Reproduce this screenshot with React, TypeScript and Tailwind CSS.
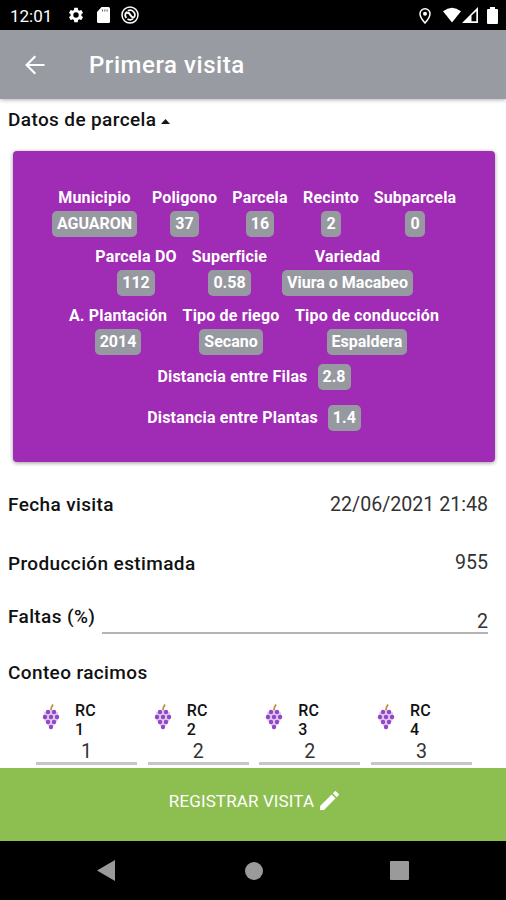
import React from "react";

type FieldData = { label: string; value: string; width: string };

const row1: FieldData[] = [
  { label: "Municipio", value: "AGUARON", width: "w-[85px]" },
  { label: "Poligono", value: "37", width: "w-[65px]" },
  { label: "Parcela", value: "16", width: "w-[56px]" },
  { label: "Recinto", value: "2", width: "w-[56px]" },
  { label: "Subparcela", value: "0", width: "w-[82px]" },
];

const row2: FieldData[] = [
  { label: "Parcela DO", value: "112", width: "w-[82px]" },
  { label: "Superficie", value: "0.58", width: "w-[75px]" },
  { label: "Variedad", value: "Viura o Macabeo", width: "w-[131px]" },
];

const row3: FieldData[] = [
  { label: "A. Plantación", value: "2014", width: "w-[99px]" },
  { label: "Tipo de riego", value: "Secano", width: "w-[97px]" },
  { label: "Tipo de conducción", value: "Espaldera", width: "w-[145px]" },
];

const clusters = [
  { n: "1", value: "1" },
  { n: "2", value: "2" },
  { n: "3", value: "2" },
  { n: "4", value: "3" },
];

function Badge({ children }: { children: React.ReactNode }) {
  return (
    <span className="h-[26px] rounded-[5px] bg-[#9799a1] px-[5px] text-[16px] leading-[26px] font-bold">
      {children}
    </span>
  );
}

function FieldRow({ fields }: { fields: FieldData[] }) {
  return (
    <div className="flex h-[59px] justify-center gap-[15px]">
      {fields.map((f) => (
        <div key={f.label} className={`flex flex-col items-center whitespace-nowrap ${f.width}`}>
          <span className="mb-[2px] h-[22px] text-[16px] leading-[22px] font-bold tracking-[0.17px]">{f.label}</span>
          <Badge>{f.value}</Badge>
        </div>
      ))}
    </div>
  );
}

function DistanceRow({ label, value }: { label: string; value: string }) {
  return (
    <div className="flex h-[26px] items-center justify-center gap-[10px] whitespace-nowrap">
      <span className="text-[16px] leading-[26px] font-bold tracking-[0.18px]">{label}</span>
      <Badge>{value}</Badge>
    </div>
  );
}

function Label({ children }: { children: React.ReactNode }) {
  return <span className="text-[19px] leading-[24px] font-medium tracking-[0.38px]">{children}</span>;
}

function Grapes() {
  const dots = [
    [6, 9], [12, 9],
    [3, 14], [9, 14], [15, 14],
    [6, 19], [12, 19],
    [9, 24],
  ];
  return (
    <svg className="mt-[2px] h-[28px] w-[18px]" viewBox="0 0 18 28">
      <path d="M9 6.500 2.500 9 0.500 14.500 5 21 9 26.500 13 21 17.500 14.500 15.500 9Z" fill="#dfc9f0" />
      <path d="M9 7C9 4.600 9.800 3.200 11 1.500" stroke="#c68a3c" strokeWidth="1.800" fill="none" />
      {dots.map(([x, y]) => (
        <circle key={`${x}-${y}`} cx={x} cy={y} r="2.200" fill="#9048c4" />
      ))}
    </svg>
  );
}

function StatusBar() {
  return (
    <div className="flex h-[30px] items-center bg-black text-white">
      <span className="ml-[10px] w-[57px] pt-[1px] text-[17px] leading-[30px]">12:01</span>
      <svg className="h-[18px] w-[18px]" viewBox="0 0 24 24" fill="white">
        <path d="M19.140 12.940c.04-.3.06-.61.06-.94 0-.32-.02-.64-.07-.94l2.030-1.580a.49.49 0 0 0 .12-.61l-1.920-3.320a.488.488 0 0 0-.59-.22l-2.390.96c-.5-.38-1.030-.7-1.620-.94l-.36-2.540a.484.484 0 0 0-.48-.41h-3.840c-.24 0-.43.17-.47.41l-.36 2.540c-.59.24-1.130.57-1.620.94l-2.390-.96c-.22-.08-.47 0-.59.22L2.740 8.870c-.12.21-.08.47.12.61l2.030 1.580c-.05.3-.09.63-.09.94s.02.64.07.94l-2.030 1.580a.49.49 0 0 0-.12.61l1.920 3.320c.12.22.37.29.59.22l2.390-.96c.5.38 1.030.7 1.620.94l.36 2.540c.05.24.24.41.48.41h3.840c.24 0 .44-.17.47-.41l.36-2.540c.59-.24 1.130-.56 1.620-.94l2.390.96c.22.08.47 0 .59-.22l1.920-3.320c.12-.22.07-.47-.12-.61l-2.010-1.580zM12 15.600A3.600 3.600 0 1 1 12 8.400a3.600 3.600 0 0 1 0 7.200z" />
      </svg>
      <svg className="ml-[12px] h-[16px] w-[13px]" viewBox="0 0 13 16">
        <path d="M4.500 0H11.500Q13 0 13 1.500V14.500Q13 16 11.500 16H1.500Q0 16 0 14.500V5Z" fill="white" />
        <path d="M5.500 2.500V4.500M7.800 2.500V4.500M10.100 2.500V4.500" stroke="#666" strokeWidth="1.100" />
      </svg>
      <svg className="ml-[11px] h-[18px] w-[18px]" viewBox="0 0 18 18" fill="none" stroke="white">
        <circle cx="9" cy="9" r="8" strokeWidth="1.500" />
        <path d="M5.300 12A4.700 4.700 0 0 1 5 6.500M6.800 4.800A4.700 4.700 0 0 1 13 11.500M12 12.600A4.700 4.700 0 0 1 6.500 13" strokeWidth="1.700" />
        <path d="M4.800 6.200 8 7.200 10.500 10.500 13 12" strokeWidth="2" />
      </svg>
      <svg className="mt-[1px] mr-[-1px] ml-auto h-[16px] w-[12px]" viewBox="0 0 12 16" fill="none" stroke="white">
        <path d="M6 .8A5 5 0 0 0 1 5.800C1 9.500 6 15 6 15S11 9.500 11 5.800A5 5 0 0 0 6 .8Z" strokeWidth="1.500" />
        <circle cx="6" cy="5.800" r="2" fill="white" stroke="none" />
      </svg>
      <svg className="ml-[13px] h-[16px] w-[18px]" viewBox="0 0 19 16">
        <path d="M0 4Q9.500-3.500 19 4L9.500 16Z" fill="white" />
      </svg>
      <svg className="ml-[1px] h-[16px] w-[16px]" viewBox="0 0 16 16">
        <path d="M0 16 16 0V16Z" fill="white" />
        <path d="M9.500 8.500 14.300 4.200V14.300H9.500Z" fill="black" />
      </svg>
      <svg className="mr-[8px] ml-[9px] h-[17px] w-[11px]" viewBox="0 0 11 17">
        <path d="M3 0H8V2H10Q11 2 11 3V16Q11 17 10 17H1Q0 17 0 16V3Q0 2 1 2H3Z" fill="white" />
      </svg>
    </div>
  );
}

export default function App() {
  return (
    <div className="flex h-[900px] w-[506px] flex-col overflow-hidden bg-white font-['Roboto',sans-serif] text-[#111]">
      <StatusBar />
      <header className="flex h-[69px] shrink-0 items-center bg-[#999ba3] text-white shadow-[0_1px_4px_rgba(0,0,0,0.3)]">
        <svg className="ml-[25px] h-[20px] w-[20px]" viewBox="0 0 20 20" fill="none" stroke="white" strokeWidth="2.200">
          <path d="M19.500 10H2M10.300 1.200 1.600 10 10.300 18.800" />
        </svg>
        <h1 className="ml-[44px] text-[24px] leading-[30px] font-medium tracking-[0.55px]">Primera visita</h1>
      </header>

      <main className="flex h-[669px] shrink-0 flex-col overflow-hidden">
        <div className="mt-[9px] ml-[8px] flex h-[24px] items-center">
          <Label>Datos de parcela</Label>
          <svg className="mt-[3px] ml-[5px] h-[5px] w-[9px]" viewBox="0 0 9 5">
            <path d="M0 5 4.500 0 9 5Z" fill="#161616" />
          </svg>
        </div>

        <section className="mt-[19px] mr-[11px] ml-[13px] h-[311px] shrink-0 rounded-[4px] bg-[#a02bb5] pt-[36px] text-white shadow-[0_1px_4px_rgba(0,0,0,0.4)]">
          <FieldRow fields={row1} />
          <FieldRow fields={row2} />
          <FieldRow fields={row3} />
          <div className="flex flex-col gap-[15px]">
            <DistanceRow label="Distancia entre Filas" value="2.8" />
            <DistanceRow label="Distancia entre Plantas" value="1.4" />
          </div>
        </section>

        <div className="mt-[31px] flex h-[24px] items-center justify-between pr-[18px] pl-[8px]">
          <Label>Fecha visita</Label>
          <span className="-mt-[1px] text-[19.600px] leading-[24px] text-[#333]">22/06/2021 21:48</span>
        </div>
        <div className="mt-[35px] flex h-[24px] items-center justify-between pr-[18px] pl-[8px]">
          <Label>Producción estimada</Label>
          <span className="-mt-[2px] text-[19.600px] leading-[24px] text-[#333]">955</span>
        </div>
        <div className="mt-[29px] flex h-[29px] pr-[18px] pl-[8px]">
          <div className="w-[94px]">
            <Label>Faltas (%)</Label>
          </div>
          <span className="h-[29px] flex-1 border-b-2 border-[#b3b3b3] pt-[5px] text-right text-[19.600px] leading-[24px] text-[#333]">2</span>
        </div>
        <h2 className="mt-[27px] ml-[8px] flex h-[24px]">
          <Label>Conteo racimos</Label>
        </h2>

        <div className="mt-[16px] ml-[36px] grid w-[436px] grid-cols-4 gap-[10.500px]">
          {clusters.map((c) => (
            <div key={c.n} className="flex h-[64px] flex-col border-b-[3px] border-[#c3c7c5]">
              <div className="flex h-[40px] pl-[6px]">
                <Grapes />
                <div className="ml-[15px] flex flex-col text-[16px] leading-[19px] font-medium tracking-[0.2px]">
                  <span>RC</span>
                  <span>{c.n}</span>
                </div>
              </div>
              <span className="h-[21px] text-center text-[19.600px] leading-[22px] text-[#333]">{c.value}</span>
            </div>
          ))}
        </div>
      </main>

      <button className="flex h-[73px] shrink-0 items-center justify-center bg-[#8dbe50] pb-[6px] pl-[5px] text-[17px] tracking-[0.13px] text-white">
        REGISTRAR VISITA
        <svg className="-mt-[3px] ml-[3px] h-[25px] w-[25px]" viewBox="0 0 24 24" fill="white">
          <path d="M3 17.250V21h3.750L17.810 9.940l-3.750-3.750L3 17.250zM20.710 7.040a.996.996 0 0 0 0-1.410l-2.340-2.340a.996.996 0 0 0-1.410 0l-1.830 1.830 3.750 3.750 1.830-1.830z" />
        </svg>
      </button>
      <nav className="flex h-[59px] shrink-0 items-center bg-black">
        <svg className="ml-[97px] h-[21px] w-[18px]" viewBox="0 0 18 21">
          <path d="M0 10.500 18 0V21Z" fill="#9a9a9a" />
        </svg>
        <div className="ml-[130px] h-[18px] w-[18px] rounded-full bg-[#9a9a9a]" />
        <div className="ml-[127px] h-[19px] w-[19px] rounded-[1px] bg-[#9a9a9a]" />
      </nav>
    </div>
  );
}
